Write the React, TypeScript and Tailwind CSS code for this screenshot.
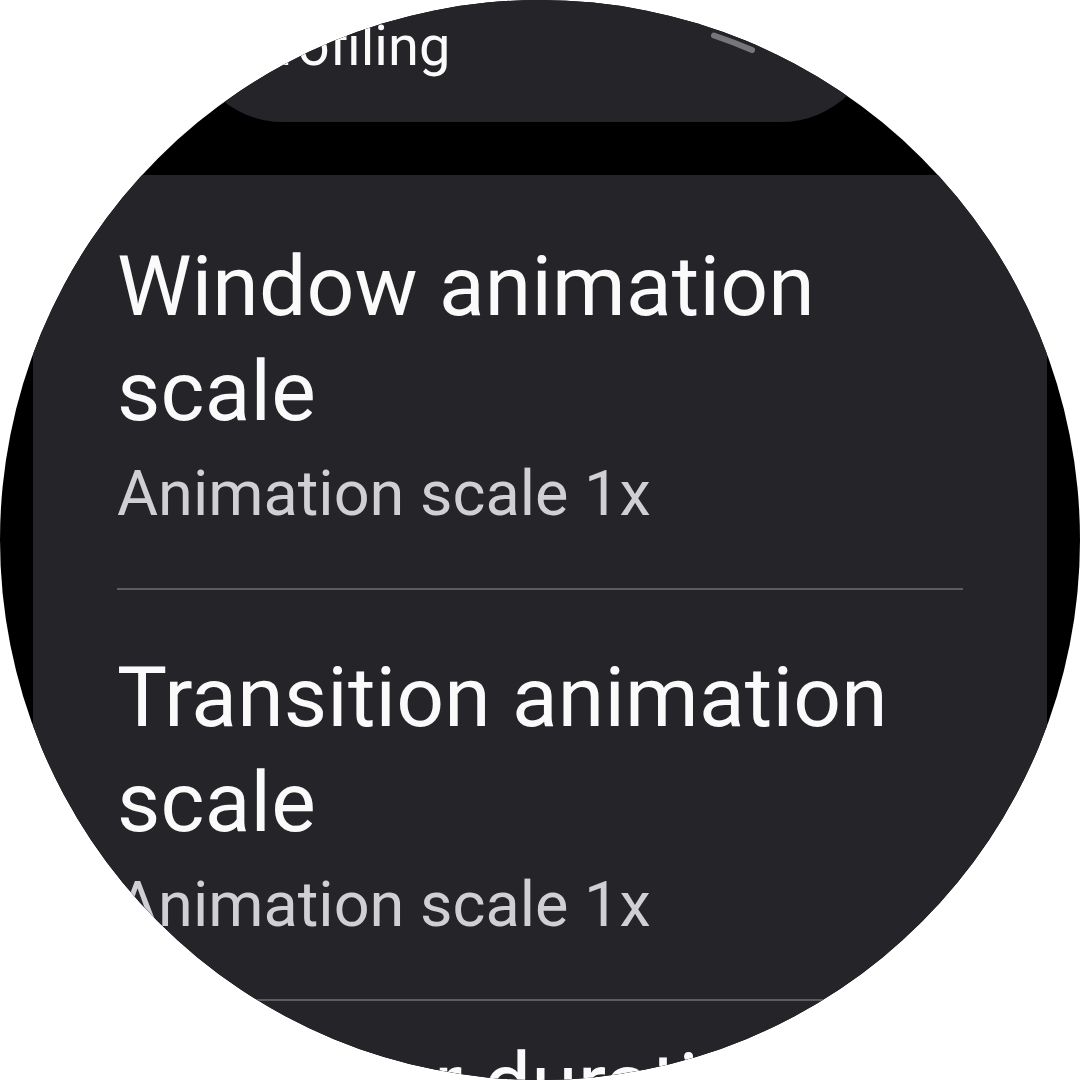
import React from 'react';

interface SettingItemProps {
    title: string;
    subtitle?: string;
    first?: boolean;
    tight?: boolean;
}

const SettingItem: React.FC<SettingItemProps> = ({ title, subtitle, first, tight }) => {
    return (
        <div
            className={`${first ? '' : 'border-t-2 border-[#5d5c61]'} ${tight ? 'pt-[30px]' : 'pt-[55px]'} pb-[54px]`}
        >
            <div className="text-[84px] leading-[105px] text-[#fafafa] tracking-[0.2px]">{title}</div>
            {subtitle && (
                <div className="mt-[10px] text-[63px] leading-[80px] text-[#d0cfd3]">{subtitle}</div>
            )}
        </div>
    );
};

const App: React.FC = () => {
    return (
        <div className="w-[1080px] h-[1080px] bg-white" style={{ fontFamily: 'Roboto, "Noto Sans", sans-serif' }}>
            <div className="relative w-[1080px] h-[1080px] rounded-full overflow-hidden bg-black">
                <div className="flex flex-col">
                    {/* chip scrolled mostly out of view */}
                    <div className="-mt-[70px] ml-[187px] w-[690px] h-[192px] rounded-[96px] bg-[#252429] pl-[57px] pt-[84px]">
                        <div className="text-[56px] leading-[64px] text-[#fafafa]">Profiling</div>
                    </div>

                    <div className="mt-[53px] mx-[33px] rounded-[44px] bg-[#252429] px-[84px] pt-[4px]">
                        <SettingItem first title="Window animation scale" subtitle="Animation scale 1x" />
                        <SettingItem title="Transition animation scale" subtitle="Animation scale 1x" />
                        <SettingItem tight title="Animator duration scale" subtitle="Animation scale 1x" />
                    </div>
                </div>

                {/* scroll position indicator along the bezel */}
                <svg className="absolute inset-0 pointer-events-none" width="1080" height="1080" viewBox="0 0 1080 1080">
                    <path
                        d="M 714 35.5 A 534 534 0 0 1 752 50"
                        fill="none"
                        stroke="#77767b"
                        strokeWidth="6"
                        strokeLinecap="round"
                    />
                </svg>
            </div>
        </div>
    );
};

export default App;
